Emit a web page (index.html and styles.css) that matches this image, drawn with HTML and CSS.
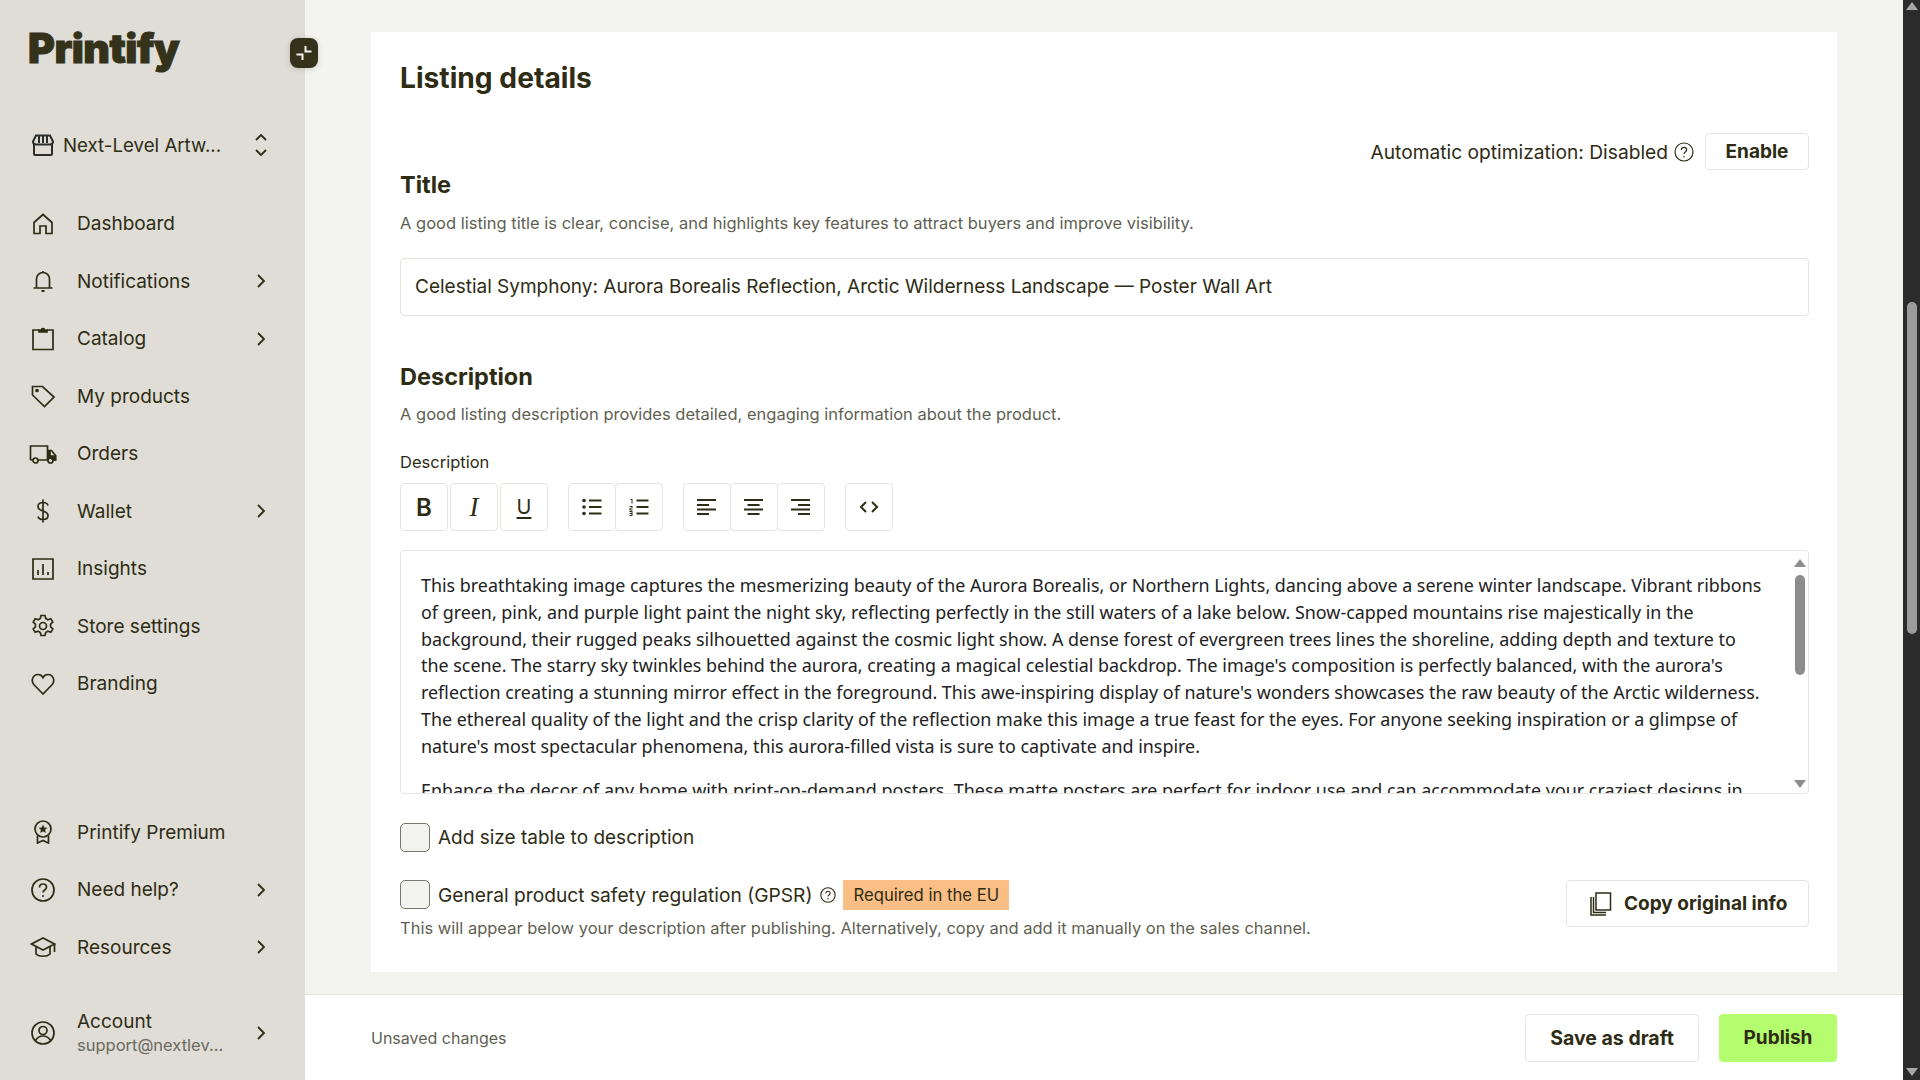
FILE: index.html
```html
<!DOCTYPE html>
<html lang="en">
<head>
    <meta charset="UTF-8">
    <title>Printify - Listing details</title>
    <link rel="stylesheet" href="styles.css">
</head>
<body>
    <aside class="sidebar">
        <div class="logo">Printify</div>
        <button class="collapse">
            <svg width="18" height="18" viewBox="0 0 18 18" fill="none" stroke="#f3f3ef" stroke-width="2"><path d="M1.500 10.500h6v5.500M10.500 2v5.500h6"/></svg>
        </button>

        <div class="store">
            <svg class="store-icon" width="24" height="24" viewBox="0 0 24 24" fill="none" stroke="#2b2d2a" stroke-width="2"><path d="M3 11v10a1 1 0 0 0 1 1h16a1 1 0 0 0 1-1V11"/><path d="M5 2.500h14l3 6c0 2-1.500 3-3.300 3H5.300C3.500 11.500 2 10.500 2 8.500zM8 3v7M12 3v7M16 3v7"/></svg>
            <span class="store-name">Next-Level Artw...</span>
            <svg class="updown" width="14" height="26" viewBox="0 0 14 26" fill="none" stroke="#2e2c14" stroke-width="1.800"><path d="M2 8l5-5 5 5M2 18l5 5 5-5"/></svg>
        </div>

        <nav class="nav">
            <a class="nav-item">
                <svg class="icon" width="24" height="24" viewBox="0 0 24 24" fill="none" stroke="#2e2c14" stroke-width="1.700"><path d="M3 21.500V10.500L12 2.500l9 8v11h-6v-7.500H9v7.500z"/></svg>
                <span>Dashboard</span>
            </a>
            <a class="nav-item">
                <svg class="icon" width="24" height="24" viewBox="0 0 24 24" fill="none" stroke="#2e2c14" stroke-width="1.700"><path d="M5.500 18.500V10a6.500 6.500 0 0 1 13 0v8.500M2.500 19h19M12 2v1.500"/><path d="M10.500 22h3" stroke-width="2"/></svg>
                <span>Notifications</span>
                <svg class="chev" width="10" height="16" viewBox="0 0 10 16" fill="none" stroke="#2e2c14" stroke-width="1.800"><path d="M2 2l6 6-6 6"/></svg>
            </a>
            <a class="nav-item">
                <svg class="icon" width="24" height="24" viewBox="0 0 24 24" fill="none" stroke="#2e2c14" stroke-width="1.700"><path d="M8 3H2v19.500h20V3h-6"/><path d="M8 5V3h2.500a1.500 1.500 0 0 1 3 0H16v2z" fill="#2e2c14"/></svg>
                <span>Catalog</span>
                <svg class="chev" width="10" height="16" viewBox="0 0 10 16" fill="none" stroke="#2e2c14" stroke-width="1.800"><path d="M2 2l6 6-6 6"/></svg>
            </a>
            <a class="nav-item">
                <svg class="icon" width="24" height="24" viewBox="0 0 24 24" fill="none" stroke="#2e2c14" stroke-width="1.700"><path d="M1.500 2.500h10L23 13l-9.500 9.500L1.500 11z"/><circle cx="6" cy="6.500" r="1" fill="#2e2c14"/></svg>
                <span>My products</span>
            </a>
            <a class="nav-item">
                <svg class="icon wide" width="28" height="24" viewBox="0 0 28 24" fill="none" stroke="#2e2c14" stroke-width="1.700"><path d="M4 18H2.500a1 1 0 0 1-1-1V4h17v14H9M18.500 8.500h4l4 5V18h-2M19 18h-.500"/><path d="M21 9v5h5.500v4H24l-2-2-3 .500V9z" fill="#2e2c14"/><circle cx="6.500" cy="18.500" r="2.500"/><circle cx="21.500" cy="18.500" r="2.500"/></svg>
                <span>Orders</span>
            </a>
            <a class="nav-item">
                <svg class="icon" width="24" height="24" viewBox="0 0 24 24" fill="none" stroke="#2e2c14" stroke-width="1.700"><path d="M17 6.500C16.500 4.500 14.500 3.500 12 3.500c-3 0-5 1.500-5 4s2 3.500 5 4.500 5 2 5 4.500-2 4-5 4c-2.500 0-4.500-1-5-3M12 .5v23"/></svg>
                <span>Wallet</span>
                <svg class="chev" width="10" height="16" viewBox="0 0 10 16" fill="none" stroke="#2e2c14" stroke-width="1.800"><path d="M2 2l6 6-6 6"/></svg>
            </a>
            <a class="nav-item">
                <svg class="icon" width="24" height="24" viewBox="0 0 24 24" fill="none" stroke="#2e2c14" stroke-width="1.700"><path d="M2 2h20v20H2zM7 18v-5M12 18V7M17 18v-3"/></svg>
                <span>Insights</span>
            </a>
            <a class="nav-item">
                <svg class="icon" width="24" height="24" viewBox="0 0 24 24" fill="none" stroke="#2e2c14" stroke-width="1.700"><circle cx="12" cy="12" r="3.500"/><path d="M10 1.500h4l.700 3 2.200 1.200 2.900-1 2 3.500-2.200 2 .000 2.600 2.200 2-2 3.500-2.900-1-2.200 1.200-.700 3h-4l-.700-3-2.200-1.200-2.900 1-2-3.500 2.200-2V10.200l-2.200-2 2-3.500 2.900 1 2.200-1.200z"/></svg>
                <span>Store settings</span>
            </a>
            <a class="nav-item">
                <svg class="icon" width="24" height="24" viewBox="0 0 24 24" fill="none" stroke="#2e2c14" stroke-width="1.700"><path d="M12 22L2.800 12.500C-.500 8.500 2 2.500 7 2.500c2.200 0 4 1 5 3 1-2 2.800-3 5-3 5 0 7.500 6 4.200 10z"/></svg>
                <span>Branding</span>
            </a>
        </nav>

        <nav class="nav nav-bottom">
            <a class="nav-item">
                <svg class="icon" width="24" height="24" viewBox="0 0 24 24" fill="none" stroke="#2e2c14" stroke-width="1.700"><circle cx="12" cy="9" r="8"/><path d="M6.500 15.500V23l5.500-2.500 5.500 2.500v-7.500"/><path d="M12 4.500l1.300 2.900 3.100.300-2.300 2.100.700 3.100-2.800-1.600-2.800 1.600.700-3.100-2.300-2.100 3.100-.300z" fill="#2e2c14" stroke="none"/></svg>
                <span>Printify Premium</span>
            </a>
            <a class="nav-item">
                <svg class="icon" width="24" height="24" viewBox="0 0 24 24" fill="none" stroke="#2e2c14" stroke-width="1.700"><circle cx="12" cy="12" r="11"/><path d="M8.500 9.500C8.500 7.500 10 6 12 6s3.500 1.400 3.500 3.300c0 2.700-3.500 2.700-3.500 5.200"/><circle cx="12" cy="18" r="1" fill="#2e2c14" stroke="none"/></svg>
                <span>Need help?</span>
                <svg class="chev" width="10" height="16" viewBox="0 0 10 16" fill="none" stroke="#2e2c14" stroke-width="1.800"><path d="M2 2l6 6-6 6"/></svg>
            </a>
            <a class="nav-item">
                <svg class="icon icon-cap" width="26" height="24" viewBox="0 0 26 24" fill="none" stroke="#2e2c14" stroke-width="1.700"><path d="M13 3L1.500 9 13 15l11.500-6z"/><path d="M6 12v7c3 3 11 3 14 0v-7M24.500 9v8"/></svg>
                <span>Resources</span>
                <svg class="chev" width="10" height="16" viewBox="0 0 10 16" fill="none" stroke="#2e2c14" stroke-width="1.800"><path d="M2 2l6 6-6 6"/></svg>
            </a>
        </nav>

        <a class="nav-item account">
            <svg class="icon" width="24" height="24" viewBox="0 0 24 24" fill="none" stroke="#2e2c14" stroke-width="1.700"><circle cx="12" cy="12" r="11"/><circle cx="12" cy="9.500" r="4"/><path d="M4.500 19.500c2-3.500 4.500-4.500 7.500-4.500s5.500 1 7.500 4.500"/></svg>
            <span class="account-text">
                <span class="account-name">Account</span>
                <span class="account-mail">support@nextlev...</span>
            </span>
            <svg class="chev" width="10" height="16" viewBox="0 0 10 16" fill="none" stroke="#2e2c14" stroke-width="1.800"><path d="M2 2l6 6-6 6"/></svg>
        </a>
    </aside>

    <main class="main">
        <div class="content">
            <section class="card">
                <h1>Listing details</h1>

                <div class="optimize">
                    <span>Automatic optimization: Disabled</span>
                    <svg width="20" height="20" viewBox="0 0 20 20" fill="none" stroke="#2e2c14" stroke-width="1.200"><circle cx="10" cy="10" r="9"/><path d="M7.300 8c0-1.600 1.200-2.700 2.700-2.700s2.700 1.100 2.700 2.500c0 2.200-2.700 2.200-2.700 4.200"/><circle cx="10" cy="14.700" r=".8" fill="#2e2c14" stroke="none"/></svg>
                    <button class="btn btn-enable">Enable</button>
                </div>

                <h2 class="h-title">Title</h2>
                <p class="hint hint-title">A good listing title is clear, concise, and highlights key features to attract buyers and improve visibility.</p>
                <div class="input">Celestial Symphony: Aurora Borealis Reflection, Arctic Wilderness Landscape — Poster Wall Art</div>

                <h2 class="h-desc">Description</h2>
                <p class="hint hint-desc">A good listing description provides detailed, engaging information about the product.</p>
                <div class="field-label">Description</div>

                <div class="toolbar">
                    <div class="tool-group gap">
                        <button class="tool"><span class="t-bold">B</span></button>
                        <button class="tool"><span class="t-italic">I</span></button>
                        <button class="tool"><span class="t-under">U</span></button>
                    </div>
                    <div class="tool-group">
                        <button class="tool">
                            <svg width="20" height="18" viewBox="0 0 20 18" fill="#2e2c14"><circle cx="2" cy="2.500" r="1.800"/><circle cx="2" cy="9" r="1.800"/><circle cx="2" cy="15.500" r="1.800"/><path d="M7 1.500h12.500v2H7zM7 8h12.500v2H7zM7 14.500h12.500v2H7z"/></svg>
                        </button>
                        <button class="tool">
                            <svg width="20" height="18" viewBox="0 0 20 18" fill="#2e2c14"><path d="M7.500 1.500h12v2h-12zM7.500 8h12v2h-12zM7.500 14.500h12v2h-12z"/><path d="M1.500 1h2v4.500h-1V2h-1zM.5 8h3v2.500h-2v1h2v1h-3v-2.500h2v-1h-2zM.5 13h3v5h-3v-1h2v-1h-2v-1h2v-1h-2z"/></svg>
                        </button>
                    </div>
                    <div class="tool-group">
                        <button class="tool">
                            <svg width="20" height="18" viewBox="0 0 20 18" fill="#2e2c14"><path d="M0 1h19v2H0zM0 6h12v2H0zM0 10.500h19v2H0zM0 15h12v2H0z"/></svg>
                        </button>
                        <button class="tool">
                            <svg width="20" height="18" viewBox="0 0 20 18" fill="#2e2c14"><path d="M0 1h19v2H0zM3.500 6h12v2h-12zM0 10.500h19v2H0zM3.500 15h12v2h-12z"/></svg>
                        </button>
                        <button class="tool">
                            <svg width="20" height="18" viewBox="0 0 20 18" fill="#2e2c14"><path d="M0 1h19v2H0zM7 6h12v2H7zM0 10.500h19v2H0zM7 15h12v2H7z"/></svg>
                        </button>
                    </div>
                    <div class="tool-group">
                        <button class="tool">
                            <svg width="20" height="14" viewBox="0 0 20 14" fill="none" stroke="#2e2c14" stroke-width="2"><path d="M7 2L2 7l5 5M13 2l5 5-5 5"/></svg>
                        </button>
                    </div>
                </div>

                <div class="editor">
                    <div class="editor-text">
                        <p>This breathtaking image captures the mesmerizing beauty of the Aurora Borealis, or Northern Lights, dancing above a serene winter landscape. Vibrant ribbons of green, pink, and purple light paint the night sky, reflecting perfectly in the still waters of a lake below. Snow-capped mountains rise majestically in the background, their rugged peaks silhouetted against the cosmic light show. A dense forest of evergreen trees lines the shoreline, adding depth and texture to the scene. The starry sky twinkles behind the aurora, creating a magical celestial backdrop. The image's composition is perfectly balanced, with the aurora's reflection creating a stunning mirror effect in the foreground. This awe-inspiring display of nature's wonders showcases the raw beauty of the Arctic wilderness. The ethereal quality of the light and the crisp clarity of the reflection make this image a true feast for the eyes. For anyone seeking inspiration or a glimpse of nature's most spectacular phenomena, this aurora-filled vista is sure to captivate and inspire.</p>
                        <p>Enhance the decor of any home with print-on-demand posters. These matte posters are perfect for indoor use and can accommodate your craziest designs in</p>
                    </div>
                    <div class="editor-scroll">
                        <span class="arrow-up"></span>
                        <span class="editor-thumb"></span>
                        <span class="arrow-down"></span>
                    </div>
                </div>

                <label class="check check-size">
                    <span class="box"></span>
                    <span>Add size table to description</span>
                </label>

                <div class="gpsr">
                    <div>
                        <label class="check">
                            <span class="box"></span>
                            <span>General product safety regulation (GPSR)</span>
                            <svg width="16" height="16" viewBox="0 0 20 20" fill="none" stroke="#2e2c14" stroke-width="1.400"><circle cx="10" cy="10" r="9"/><path d="M7.300 8c0-1.600 1.200-2.700 2.700-2.700s2.700 1.100 2.700 2.500c0 2.200-2.700 2.200-2.700 4.200"/><circle cx="10" cy="14.700" r=".9" fill="#2e2c14" stroke="none"/></svg>
                            <span class="badge">Required in the EU</span>
                        </label>
                        <p class="hint hint-gpsr">This will appear below your description after publishing. Alternatively, copy and add it manually on the sales channel.</p>
                    </div>
                    <button class="btn btn-copy">
                        <svg width="22" height="24" viewBox="0 0 22 24" fill="none" stroke="#2e2c14" stroke-width="1.500"><path d="M6 1h14.500v17H6z"/><path d="M1 5v18h15"/><path d="M3.500 5v15.500H16"/></svg>
                        Copy original info
                    </button>
                </div>
            </section>
        </div>

        <footer class="footer">
            <span class="unsaved">Unsaved changes</span>
            <button class="btn btn-draft">Save as draft</button>
            <button class="btn btn-publish">Publish</button>
        </footer>
    </main>

    <div class="page-scroll">
        <span class="arrow-up"></span>
        <span class="page-thumb"></span>
        <span class="arrow-down"></span>
    </div>
</body>
</html>
```

FILE: styles.css
```css
* {
    box-sizing: border-box;
}

html,
body {
    height: 1080px;
    margin: 0;
    overflow: hidden;
}

body {
    display: flex;
    font-family: "Inter", sans-serif;
    color: #2e2c14;
    background-color: #f3f3ef;
}

/* sidebar */
.sidebar {
    position: relative;
    width: 305px;
    height: 1080px;
    flex: none;
    padding: 0 39px 0 28px;
    background-color: #dfddd6;
    display: flex;
    flex-direction: column;
}

.logo {
    height: 40px;
    margin-top: 28px;
    font-family: "Inter", sans-serif;
    font-weight: 900;
    font-size: 41px;
    line-height: 40px;
    letter-spacing: -0.5px;
    color: #34321a;
    -webkit-text-stroke: 1px #34321a;
}

.collapse {
    position: absolute;
    top: 38px;
    right: -13px;
    width: 28px;
    height: 30px;
    padding: 0;
    border: none;
    border-radius: 8px;
    background-color: #34321a;
    box-shadow: 0 1px 6px rgba(0, 0, 0, 0.15);
    display: flex;
    align-items: center;
    justify-content: center;
}

.store {
    display: flex;
    align-items: center;
    height: 40px;
    margin-top: 57px;
    font-size: 18.700px;
}

.store-icon {
    flex: none;
    margin-left: 3px;
}

.store-name {
    margin-left: 8px;
    flex: 1;
}

.updown {
    margin-right: -2px;
}

.nav {
    margin-top: 30px;
}

.nav-bottom {
    margin-top: auto;
}

.nav-item {
    display: flex;
    align-items: center;
    height: 57.5px;
    font-size: 19px;
}

.icon {
    flex: none;
    margin-left: 3px;
    margin-right: 22px;
}

.icon.wide {
    margin-left: 1px;
    margin-right: 20px;
}

.icon.icon-cap {
    margin-left: 2px;
    margin-right: 21px;
}

.nav-item span {
    flex: 1;
}

.chev {
    flex: none;
}

.account {
    height: 58px;
    margin-top: 28px;
    margin-bottom: 18px;
}

.account-text {
    display: flex;
    flex-direction: column;
}

.account-name {
    line-height: 24px;
}

.account-mail {
    font-size: 16.500px;
    line-height: 22px;
    color: #6a6a60;
}

/* main */
.main {
    flex: 1;
    display: flex;
    flex-direction: column;
    height: 1080px;
}

.content {
    flex: 1;
    padding: 32px 66px 0;
    overflow: hidden;
}

.card {
    height: 940px;
    padding: 29px 28px 0 29px;
    background-color: #fff;
}

h1 {
    margin: 0;
    font-size: 28.200px;
    line-height: 34px;
    font-weight: 700;
}

h2 {
    margin: 0;
    font-size: 23.500px;
    line-height: 26px;
    font-weight: 700;
}

.hint {
    margin: 0;
    font-size: 16.500px;
    line-height: 20px;
    color: #5f5f52;
}

.optimize {
    display: flex;
    align-items: center;
    justify-content: flex-end;
    gap: 6px;
    height: 37px;
    margin-top: 38px;
    font-size: 19.200px;
}

.btn {
    font-family: inherit;
    font-weight: 700;
    font-size: 19px;
    color: #2e2c14;
    background-color: #fff;
    border: 1px solid #e5e5e0;
    border-radius: 4px;
}

.btn-enable {
    width: 104px;
    height: 37px;
    margin-left: 5px;
}

.h-title {
    margin-top: 2px;
}

.hint-title {
    margin-top: 15px;
}

.input {
    height: 58px;
    margin-top: 25px;
    padding: 0 14px;
    border: 1px solid #e5e5e0;
    border-radius: 4px;
    font-size: 19px;
    line-height: 56px;
}

.h-desc {
    margin-top: 48px;
}

.hint-desc {
    margin-top: 14px;
}

.field-label {
    margin-top: 28px;
    font-size: 16.500px;
    line-height: 20px;
}

.toolbar {
    display: flex;
    gap: 20px;
    margin-top: 11px;
}

.tool-group {
    display: flex;
}

.tool-group.gap {
    gap: 2px;
}

.tool {
    width: 48px;
    height: 48px;
    padding: 0;
    margin-right: -1px;
    background-color: #fff;
    border: 1px solid #e5e5e0;
    border-radius: 4px;
    display: flex;
    align-items: center;
    justify-content: center;
    color: #2e2c14;
}

.tool:last-child {
    margin-right: 0;
}

.tool-group.gap .tool {
    margin-right: 0;
}

.t-bold {
    font: 600 24px "Inter", sans-serif;
}

.t-italic {
    font: italic 400 27px "Liberation Serif", serif;
}

.t-under {
    font: 400 20px "Inter", sans-serif;
    text-decoration: underline;
    text-underline-offset: 3px;
    text-decoration-thickness: 2px;
}

.editor {
    position: relative;
    height: 244px;
    margin-top: 19px;
    border: 1px solid #e5e5e0;
    border-radius: 4px;
    overflow: hidden;
}

.editor-text {
    padding: 21px 42px 0 20px;
    font-family: "Noto Sans", sans-serif;
    font-size: 17.900px;
    line-height: 26.800px;
    color: #222;
}

.editor-text p {
    margin: 0 0 17px;
}

.editor-scroll {
    position: absolute;
    top: 0;
    right: 0;
    bottom: 0;
    width: 17px;
    background-color: #fff;
    padding-top: 8px;
    display: flex;
    flex-direction: column;
    align-items: center;
}

.editor-thumb {
    width: 10px;
    height: 100px;
    margin-top: 8px;
    border-radius: 5px;
    background-color: #8c8c8c;
}

.editor-scroll .arrow-down {
    margin-top: auto;
    margin-bottom: 5px;
}

.arrow-up {
    width: 0;
    height: 0;
    border-left: 6px solid transparent;
    border-right: 6px solid transparent;
    border-bottom: 8px solid #8c8c8c;
}

.arrow-down {
    width: 0;
    height: 0;
    border-left: 6px solid transparent;
    border-right: 6px solid transparent;
    border-top: 8px solid #8c8c8c;
}

.check {
    display: flex;
    align-items: center;
    gap: 8px;
    height: 29px;
    font-size: 19.200px;
}

.check-size {
    margin-top: 29px;
    font-size: 19px;
}

.box {
    width: 30px;
    height: 29px;
    flex: none;
    background-color: #f3f3ef;
    border: 1px solid #77776c;
    border-radius: 5px;
}

.badge {
    padding: 0 10px;
    margin-left: -1px;
    font-size: 16.700px;
    line-height: 30px;
    background-color: #fbbf85;
}

.gpsr {
    display: flex;
    justify-content: space-between;
    margin-top: 28px;
}

.hint-gpsr {
    margin-top: 9px;
}

.btn-copy {
    display: flex;
    align-items: center;
    gap: 12px;
    width: 243px;
    height: 47px;
    padding-left: 23px;
}

/* bottom bar */
.footer {
    height: 86px;
    flex: none;
    display: flex;
    align-items: center;
    padding: 0 66px;
    background-color: #fff;
    border-top: 1px solid #e5e5e0;
}

.unsaved {
    flex: 1;
    font-size: 16px;
    color: #5f5f52;
}

.btn-draft {
    width: 174px;
    height: 48px;
    font-size: 19.500px;
}

.btn-publish {
    width: 118px;
    height: 48px;
    margin-left: 20px;
    background-color: #b3fd6f;
    border-color: #b3fd6f;
}

/* page scrollbar */
.page-scroll {
    width: 17px;
    height: 1080px;
    flex: none;
    background-color: #2b2b2b;
    padding: 2px 0 4px;
    display: flex;
    flex-direction: column;
    align-items: center;
}

.page-thumb {
    width: 10px;
    height: 332px;
    margin-top: 292px;
    border-radius: 5px;
    background-color: #9b9b9b;
}

.page-scroll .arrow-down {
    margin-top: auto;
}

.page-scroll .arrow-up {
    border-bottom-color: #a8a8a8;
}

.page-scroll .arrow-down {
    border-top-color: #a8a8a8;
}
```
